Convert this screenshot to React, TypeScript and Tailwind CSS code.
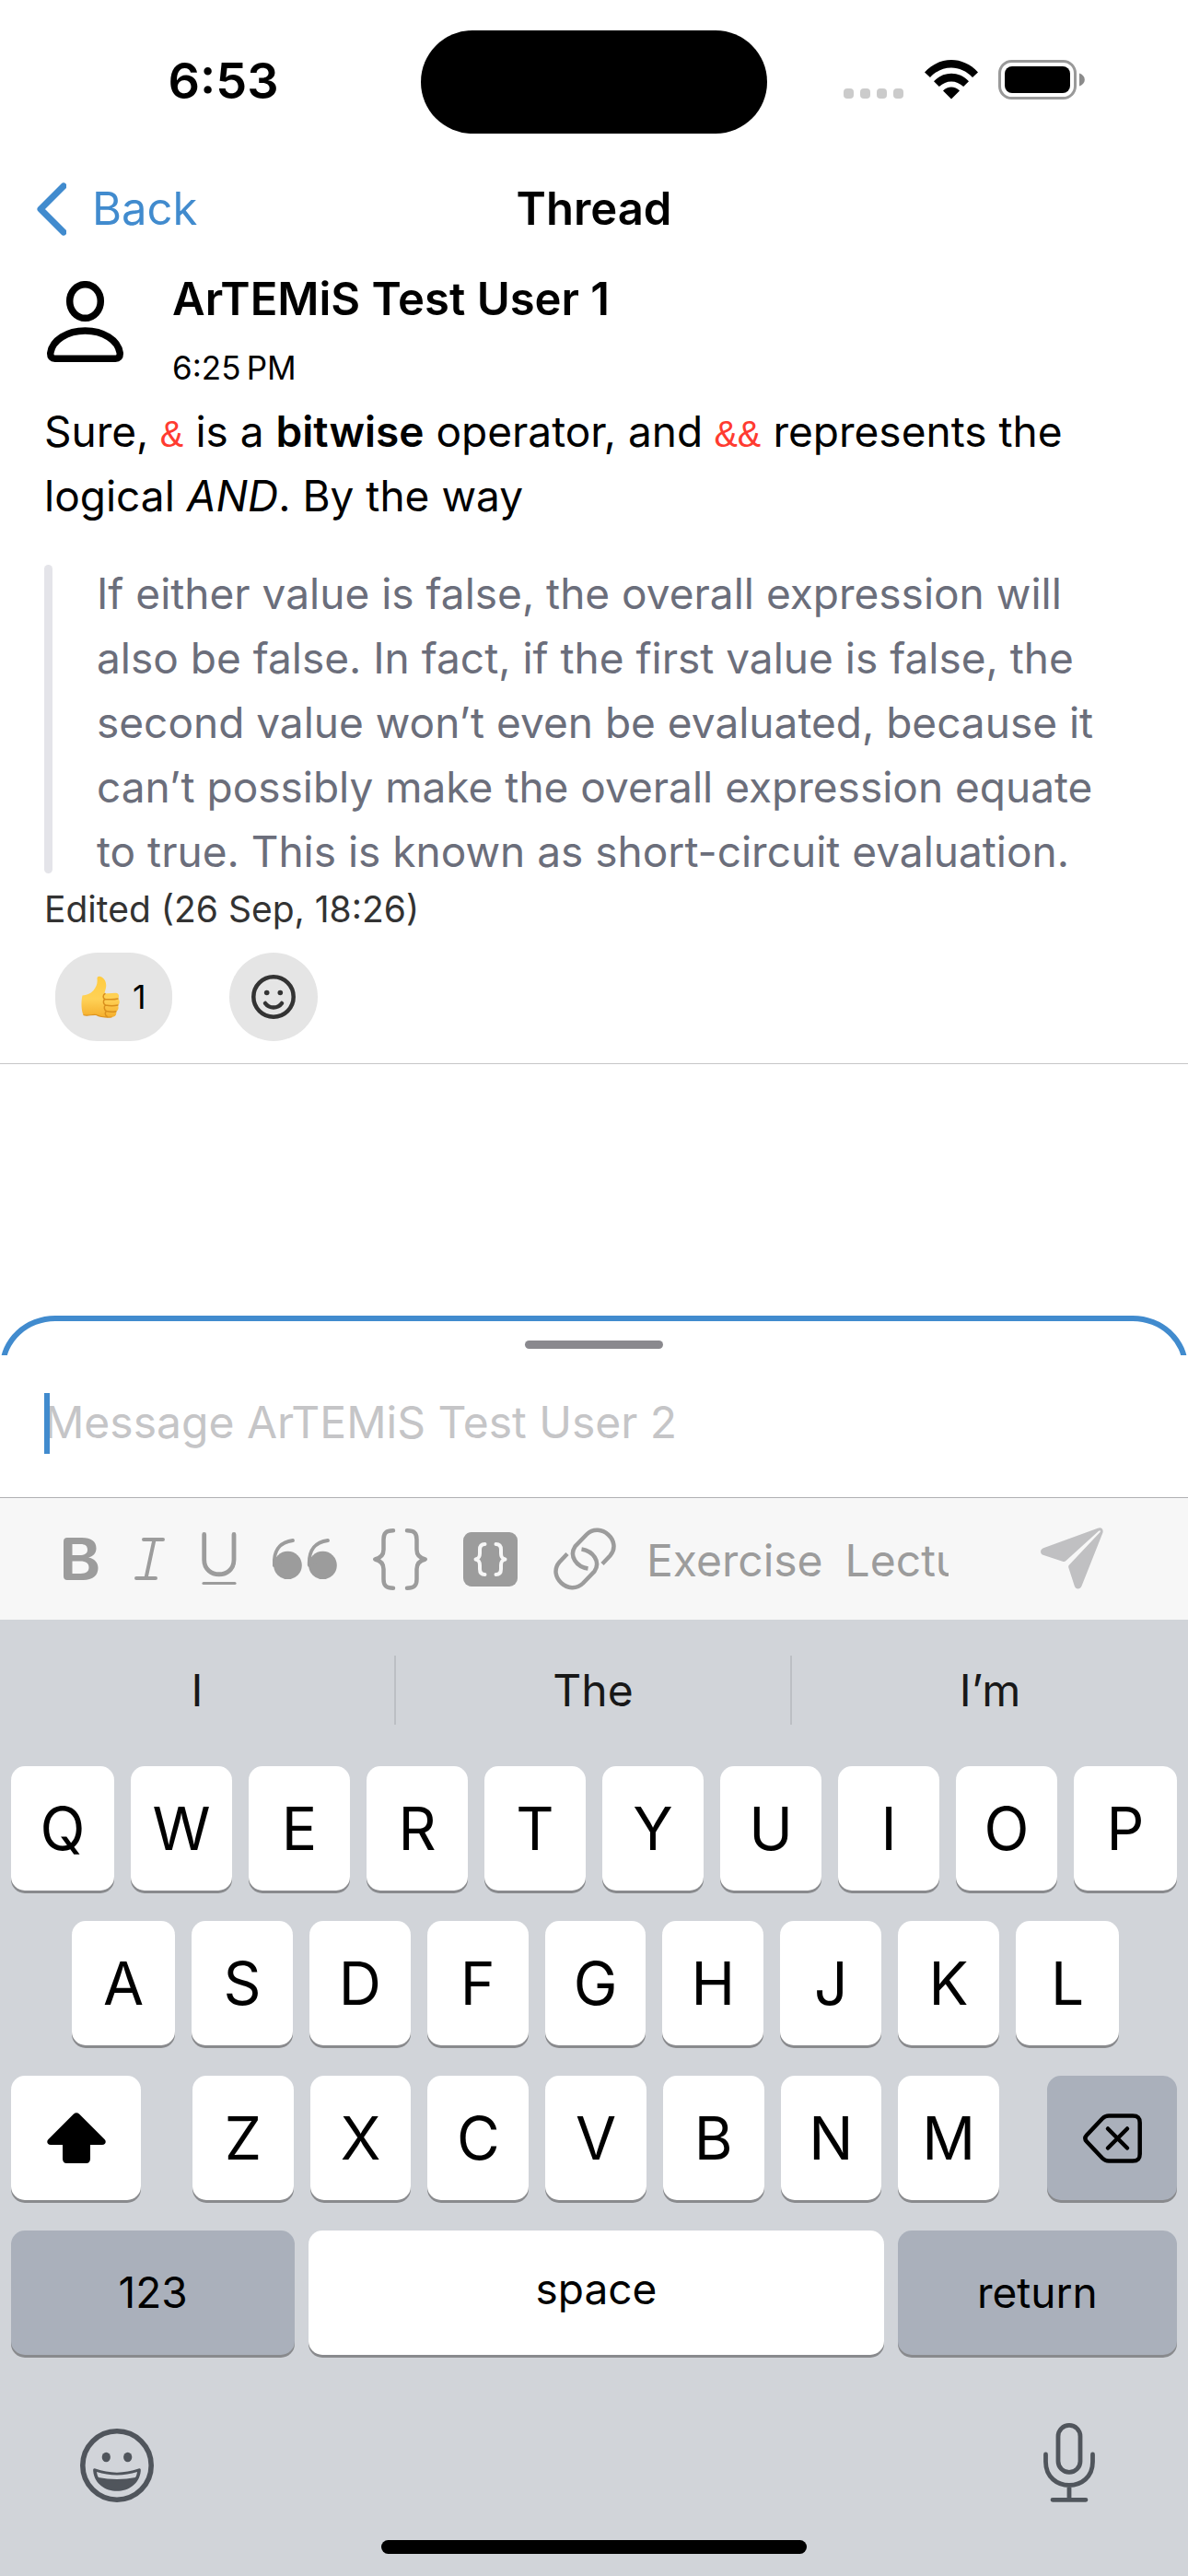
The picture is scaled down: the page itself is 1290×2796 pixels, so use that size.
import type { ReactNode } from "react";

function StatusBar() {
  return (
    <div className="grid grid-cols-[1fr_376px_1fr] items-center pt-[33px]">
      <div className="pb-[2px] pl-7 text-center text-[54px] leading-[60px] font-semibold">6:53</div>
      <div className="h-28 rounded-full bg-black" />
      <div className="flex items-center justify-end pr-28 pb-1">
        <svg width="66" height="44" viewBox="0 0 66 44" className="mr-[22px]" aria-hidden="true">
          {[0, 18, 36, 54].map((x) => (
            <rect key={x} x={x} y="31" width="11" height="11" rx="4" fill="#cbcbcb" />
          ))}
        </svg>
        <svg width="58" height="44" viewBox="0 0 58 44" className="mr-[22px]" aria-label="Wi-Fi">
          <path d="M0 13.5C16-4.5 42-4.5 58 13.5L52 19C39 5 19 5 6 19Z" />
          <path d="M10 23.2C20.500 12 37.500 12 48 23.200L42.200 29C34.500 21.500 23.500 21.500 15.800 29Z" />
          <path d="M20 33.500C25 28.200 33 28.200 38 33.500L29 42.500Z" />
        </svg>
        <svg width="94" height="44" viewBox="0 0 94 44" aria-label="Battery">
          <rect x="1.500" y="1.500" width="82" height="40" rx="13" fill="none" stroke="#999" strokeWidth="3" />
          <rect x="7" y="7" width="71" height="29" rx="8" />
          <path d="M88 14.500C92 16 93.800 18.500 93.800 21.500S92 27 88 28.500Z" fill="#8b8b8b" />
        </svg>
      </div>
    </div>
  );
}

function NavBar() {
  return (
    <header className="mt-[30px] grid h-[106px] grid-cols-[1fr_auto_1fr] items-center px-[38px] pb-[2px]">
      <button className="flex items-center gap-7 text-[49px] leading-[60px] text-[#418bce]">
        <svg width="34" height="58" viewBox="0 0 34 58" fill="none" stroke="currentColor" strokeWidth="7" strokeLinecap="round" strokeLinejoin="round" aria-hidden="true">
          <path d="M31 4L6 29L31 54" />
        </svg>
        Back
      </button>
      <h1 className="text-[49px] leading-[60px] font-semibold">Thread</h1>
      <span />
    </header>
  );
}

function ThumbsUp() {
  return (
    <svg width="42" height="46" viewBox="0 0 42 46" aria-label="Thumbs up">
      <defs>
        <linearGradient id="skin" x1="0" y1="0" x2="0" y2="1">
          <stop offset="0" stopColor="#ffcb3f" />
          <stop offset="0.550" stopColor="#ffd257" />
          <stop offset="1" stopColor="#f5ae2c" />
        </linearGradient>
      </defs>
      <path d="M1.500 21.500C6 21 10 20 13.500 16C17 12 18 8 17.500 3.500C17.300 1.200 19 .5 21 1C26 2.500 28 8 27 13C26.500 16 25.500 18 25.500 19.500L37.500 18.800C41 18.800 42 22.500 40.200 25C42.600 27 42 31 39.800 32C41.400 34.500 40.500 38 38 38.800C39.200 42 37 45 33.500 45C26 45.500 21 45 16.500 42.500C12 41.500 7 44.500 2.500 42.500C0 38 0 27 1.500 21.500Z" fill="url(#skin)" />
      <path d="M26 19.500C23.500 21 23.500 24.500 26 25.500C23.500 27 24 31 26.500 32C24.500 33.500 25 37.500 27.500 38.500C25.500 40 26 43 28.500 44.500M26 25.500C31 26 36 26 40 25M26.500 32C31 32.800 36 32.800 40 32M27.500 38.600C31 39.500 35 39.500 38 38.800" fill="none" stroke="#d98f1c" strokeWidth="1.500" strokeLinecap="round" />
      <path d="M2.500 42.500C7 44.500 12 41.500 16.500 42.500C21 45 28 45.300 33.500 45" fill="none" stroke="#dd9420" strokeWidth="1.200" />
    </svg>
  );
}

function Code({ children }: { children: ReactNode }) {
  return (
    <code className="font-['Liberation_Mono',monospace] text-[42px] leading-none text-[#ff3b30]">{children}</code>
  );
}

function Message() {
  return (
    <article className="border-b border-[#c6c6c8] px-12 pt-[14px] pb-6">
      <div className="flex">
        <svg width="84" height="88" viewBox="0 0 84 88" className="mt-[10px] ml-[3px] shrink-0" fill="none" stroke="#000" strokeWidth="7.500" aria-label="User">
          <ellipse cx="41.500" cy="22" rx="16.800" ry="18.300" />
          <path d="M10 84.300H73C78 84.300 79.500 82 79.200 78C77 64 61 54 41.500 54S6 64 3.800 78C3.500 82 5 84.300 10 84.300Z" />
        </svg>
        <div className="ml-[52px]">
          <h2 className="text-[49px] leading-[60px] font-semibold">ArTEMiS Test User 1</h2>
          <time className="mt-5 block text-[35px] leading-12">6:25&#8201;PM</time>
        </div>
      </div>
      <p className="mt-[10px] text-[46px] leading-[70px]">
        Sure, <Code>&amp;</Code> is a <strong className="font-semibold">bitwise</strong> operator, and{" "}
        <Code>&amp;&amp;</Code> represents the
        <br />
        logical <em>AND</em>. By the way
      </p>
      <div className="mt-9 flex">
        <div className="mt-1 mb-[11px] w-[9px] shrink-0 rounded-full bg-[#e4e4e9]" />
        <blockquote className="ml-12 text-[46px] leading-[70px] text-[#6b6e7b]">
          If either value is false, the overall expression will
          <br />
          also be false. In fact, if the first value is false, the
          <br />
          second value won’t even be evaluated, because it
          <br />
          can’t possibly make the overall expression equate
          <br />
          to true. This is known as short-circuit evaluation.
        </blockquote>
      </div>
      <p className="mt-1 text-[39px] leading-12 text-[#333]">Edited (26 Sep, 18:26)</p>
      <div className="mt-[23px] flex gap-[62px] pl-3">
        <button className="flex h-24 items-center gap-[14px] rounded-[46px] bg-[#e5e5e5] px-7 text-[36px] leading-12">
          <ThumbsUp />
          <span>1</span>
        </button>
        <button aria-label="Add reaction" className="flex size-24 items-center justify-center rounded-full bg-[#e5e5e5]">
          <svg width="48" height="48" viewBox="0 0 48 48" fill="none" stroke="#333" strokeWidth="4.500" aria-hidden="true">
            <circle cx="24" cy="24" r="21.700" />
            <circle cx="16.700" cy="19.500" r="2.800" fill="#333" stroke="none" />
            <circle cx="31.300" cy="19.500" r="2.800" fill="#333" stroke="none" />
            <path d="M15 31C19.500 37 28.500 37 33 31" strokeLinecap="round" />
          </svg>
        </button>
      </div>
    </article>
  );
}

function Tool({ label, children }: { label: string; children: ReactNode }) {
  return (
    <button aria-label={label} className="shrink-0">
      {children}
    </button>
  );
}

function Toolbar() {
  return (
    <div className="flex h-[133px] items-center justify-between border-t border-[#b0b0b2] bg-[#f7f7f7] pr-[92px] pl-[68px]">
      <div className="mr-[100px] flex min-w-0 flex-1 items-center gap-[39px] overflow-hidden pl-px text-[#9c9c9c]">
        <Tool label="Bold">
          <svg width="38" height="46" viewBox="0 0 38 46" aria-hidden="true">
            <path
              fill="currentColor"
              fillRule="evenodd"
              d="M4 0H20C30 0 35.500 4 35.500 11.500C35.500 17 32 20.500 27 21.500C33.500 22.500 37.500 27 37.500 33C37.500 41 31.500 46 21.500 46H4C1.500 46 0 44.500 0 42V4C0 1.500 1.500 0 4 0ZM9.500 7V19H17C23 19 26 17 26 13C26 9 23.500 7 18.500 7ZM9.500 25.500V39H18.500C24.500 39 27.500 36.800 27.500 32.300C27.500 27.800 24.500 25.500 18 25.500Z"
            />
          </svg>
        </Tool>
        <Tool label="Italic">
          <svg width="34" height="46" viewBox="0 0 34 46" fill="none" stroke="currentColor" strokeWidth="4" strokeLinecap="round">
            <path d="M10 2H31M2 44H23M21.500 2L12.500 44" />
          </svg>
        </Tool>
        <Tool label="Underline">
          <svg width="38" height="58" viewBox="0 0 38 58" fill="none" stroke="currentColor" strokeLinecap="round">
            <path d="M2.700 2.500V30C2.700 51 35 51 35 30V2.500" strokeWidth="4.800" />
            <path d="M2 55.500H36" strokeWidth="3.200" />
          </svg>
        </Tool>
        <Tool label="Quote">
          <svg width="70" height="44" viewBox="0 0 70 44">
            {[0, 38].map((x) => (
              <g key={x} transform={`translate(${x} 0)`}>
                <circle cx="16.500" cy="29" r="15.300" fill="currentColor" />
                <path d="M1.800 29C1 12 8 4 22 2" fill="none" stroke="currentColor" strokeWidth="3.800" strokeLinecap="round" />
                <path d="M1 29L4 20L10 26Z" fill="currentColor" />
              </g>
            ))}
          </svg>
        </Tool>
        <Tool label="Inline code">
          <svg width="59" height="67" viewBox="0 0 59 67" fill="none" stroke="currentColor" strokeWidth="4.500" strokeLinecap="round" strokeLinejoin="round">
            <path d="M22 2.300C14 2.300 11.500 5 11.500 12V23C11.500 29 8.500 32 2.300 33.500C8.500 35 11.500 38 11.500 44V55C11.500 62 14 64.700 22 64.700" />
            <path d="M37 2.300C45 2.300 47.500 5 47.500 12V23C47.500 29 50.500 32 56.700 33.500C50.500 35 47.500 38 47.500 44V55C47.500 62 45 64.700 37 64.700" />
          </svg>
        </Tool>
        <Tool label="Code block">
          <svg width="59" height="59" viewBox="0 0 59 59" fill="none">
            <rect width="59" height="59" rx="9" fill="currentColor" />
            <g stroke="#f7f7f7" strokeWidth="4" strokeLinecap="round" strokeLinejoin="round">
              <path d="M23.500 13C19.500 13 18 15 18 19V23C18 27 17 28.500 13.500 29.500C17 30.500 18 32 18 36V40C18 44 19.500 46 23.500 46" />
              <path d="M35.500 13C39.500 13 41 15 41 19V23C41 27 42 28.500 45.500 29.500C42 30.500 41 32 41 36V40C41 44 39.500 46 35.500 46" />
            </g>
          </svg>
        </Tool>
        <Tool label="Link">
          <svg width="68" height="68" viewBox="0 0 68 68" fill="none" stroke="currentColor" strokeWidth="4.500">
            <path d="M37.500 44.500C25 42.500 16.500 31 23.500 20.500L36 7.500C51-7 75 15 61.500 30.500L53 39.500" />
            <path d="M30.500 23.500C43 25.500 51.500 37 44.500 47.500L32 60.500C17 75-7 53 6.500 37.500L15 28.500" />
          </svg>
        </Tool>
        <div className="-ml-[6px] flex gap-6 pt-1 text-[48px] leading-[60px]">
          <button>Exercise</button>
          <button>Lecture</button>
        </div>
      </div>
      <button aria-label="Send" className="text-[#c0c0c2]">
        <svg width="68" height="68" viewBox="0 0 68 68" fill="currentColor" aria-hidden="true">
          <path d="M62 .8C65.500-.8 68.500 1.500 67.500 5.500L44.500 63.500C43 67.500 38 67.500 36.800 63.500L30.300 43.500C30 42.500 30.200 41.500 30.800 40.800L64.500 5C65.500 3.500 64.500 2.500 63 3.700L27.500 36C26.500 37 25.500 37.200 24.500 36.900L3.300 30C-1 28.500-1 24 3 22.200Z" />
        </svg>
      </button>
    </div>
  );
}

function Composer() {
  return (
    <section className="relative">
      <div className="pointer-events-none absolute inset-x-0 top-0 h-[43px] overflow-hidden">
        <div className="h-32 rounded-t-[60px_56px] border-[6px] border-[#418bce]" />
      </div>
      <div className="pt-[27px]">
        <div className="mx-auto h-[9px] w-[150px] rounded-full bg-[#8a898e]" />
      </div>
      <div className="px-12 pt-12 pb-[47px]">
        <div className="relative">
          <input
            type="text"
            aria-label="Message"
            placeholder="Message ArTEMiS Test User 2"
            className="block h-[66px] w-full bg-transparent pb-1 text-[48px] leading-[60px] outline-none placeholder:text-[#c5c5c7]"
          />
          <span className="absolute inset-y-0 left-0 w-[6px] bg-[#418bce]" />
        </div>
      </div>
      <Toolbar />
    </section>
  );
}

const keyBase = "flex h-[135px] items-center justify-center rounded-[15px] shadow-[0_3px_0_#898a8d]";

function Letters({ keys, wideEnds = false }: { keys: string; wideEnds?: boolean }) {
  const ends = wideEnds ? "first:w-28 first:flex-none last:w-28 last:flex-none" : "";
  return (
    <div className="flex flex-1 gap-[18px]">
      {keys.split("").map((k) => (
        <button key={k} className={`${keyBase} min-w-0 flex-1 bg-white text-[64px] leading-none ${ends}`}>
          {k}
        </button>
      ))}
    </div>
  );
}

function Keyboard() {
  return (
    <section className="bg-[#d1d4d9] pt-[39px]">
      <div className="grid h-[75px] grid-cols-3 divide-x-2 divide-[#bcbfc4] text-[48px] leading-[60px] text-[#181818]">
        <button>I</button>
        <button>The</button>
        <button>I’m</button>
      </div>
      <div className="mt-[45px] flex flex-col gap-[33px] px-3">
        <div className="flex">
          <Letters keys="QWERTYUIOP" wideEnds />
        </div>
        <div className="flex pr-[63px] pl-[66px]">
          <Letters keys="ASDFGHJKL" wideEnds />
        </div>
        <div className="flex">
          <button aria-label="Shift" className={`${keyBase} mr-14 w-[141px] bg-white`}>
            <svg width="64" height="55" viewBox="0 0 64 55" aria-hidden="true">
              <path d="M29 1.500C31 -.3 33 -.3 35 1.500L62.500 29C65 31.500 63.500 35 60 35H47V50C47 53 45.500 55 42.500 55H21.500C18.500 55 17 53 17 50V35H4C.5 35-1 31.500 1.500 29Z" />
            </svg>
          </button>
          <Letters keys="ZXCVBNM" />
          <button aria-label="Delete" className={`${keyBase} ml-[52px] w-[141px] bg-[#aab0bb]`}>
            <svg width="64" height="54" viewBox="0 0 64 54" fill="none" stroke="#000" strokeWidth="4.500" strokeLinecap="round" strokeLinejoin="round" aria-hidden="true">
              <path d="M28 2.500H54C60 2.500 61.700 5 61.700 10V44C61.700 49 60 51.500 54 51.500H28C25 51.500 23 50.500 21 48.500L4 30.500C1.700 28 1.700 26 4 23.500L21 5.500C23 3.500 25 2.500 28 2.500Z" />
              <path d="M27 16.500L48 37.500M48 16.500L27 37.500" />
            </svg>
          </button>
        </div>
        <div className="grid grid-cols-[308fr_624fr_303fr] gap-[15px] text-[46px] leading-[60px]">
          <button className={`${keyBase} bg-[#aab0bb] pb-[2px]`}>123</button>
          <button className={`${keyBase} bg-white pb-[10px]`}>space</button>
          <button className={`${keyBase} bg-[#aab0bb] pb-[2px]`}>return</button>
        </div>
      </div>
      <div className="flex items-end justify-between px-[87px] pt-[74px] text-[#50555c]">
        <button aria-label="Emoji">
          <svg width="80" height="80" viewBox="0 0 80 80" fill="none" aria-hidden="true">
            <circle cx="40" cy="40" r="37.200" stroke="currentColor" strokeWidth="5.600" />
            <ellipse cx="28.300" cy="31" rx="4.600" ry="5.300" fill="currentColor" />
            <ellipse cx="51.700" cy="31" rx="4.600" ry="5.300" fill="currentColor" />
            <path d="M16.500 43.500C32 49 48 49 63.500 43.500C65.500 43 66 44 65.800 46C63 75 17 75 14.200 46C14 44 14.500 43 16.500 43.500Z" fill="currentColor" />
            <path d="M18 47C32 51.500 48 51.500 62 47C61.500 50 61 52 60 53C48 55.500 32 55.500 20 53C19 52 18.500 50 18 47Z" fill="#d1d4d9" />
          </svg>
        </button>
        <button aria-label="Dictate" className="mr-[14px]">
          <svg width="56" height="86" viewBox="0 0 56 86" fill="none" stroke="currentColor" strokeWidth="4.800" strokeLinecap="round" aria-hidden="true">
            <rect x="16" y="2.400" width="24" height="51" rx="12" />
            <path d="M2.500 34V42C2.500 76 53.500 76 53.500 42V34M28 68V83M10 83.300H46" />
          </svg>
        </button>
      </div>
      <div className="pt-[41px] pb-6">
        <div className="mx-auto h-[15px] w-[462px] rounded-full bg-black" />
      </div>
    </section>
  );
}

export default function App() {
  return (
    <div className="flex min-h-screen flex-col bg-white font-['Inter',sans-serif] text-black">
      <StatusBar />
      <NavBar />
      <main className="flex-1">
        <Message />
      </main>
      <Composer />
      <Keyboard />
    </div>
  );
}
